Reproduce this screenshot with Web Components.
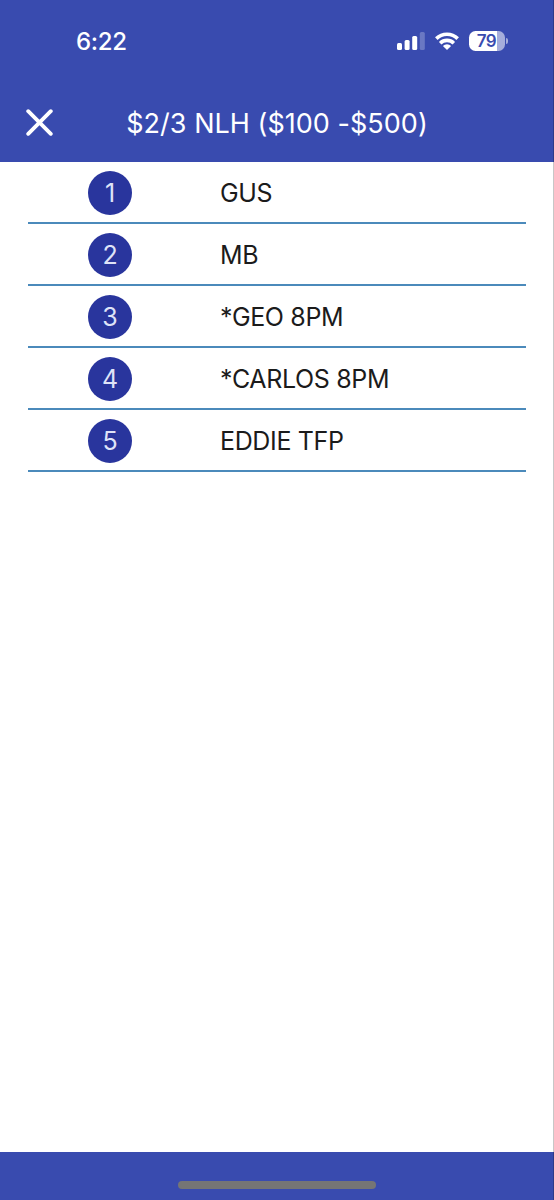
<!DOCTYPE html>
<html lang="en">
<head>
<meta charset="utf-8">
<title>Waiting list</title>
<style>
	html, body { margin: 0; height: 100%; }
	body { background: #fff; font-family: Inter, "Liberation Sans", sans-serif; }
</style>
</head>
<body>
<phone-screen>
	<status-bar slot="top" battery="79">6:22</status-bar>
	<title-bar slot="top">$2/3 NLH ($100 -$500)</title-bar>
	<wait-list>
		<wait-row number="1">GUS</wait-row>
		<wait-row number="2">MB</wait-row>
		<wait-row number="3">*GEO 8PM</wait-row>
		<wait-row number="4">*CARLOS 8PM</wait-row>
		<wait-row number="5">EDDIE TFP</wait-row>
	</wait-list>
	<home-bar slot="bottom"></home-bar>
</phone-screen>

<script>
	// attach an open shadow root holding the given markup
	class BaseElement extends HTMLElement {
		constructor() {
			super();
			const template = document.createElement('template');
			template.innerHTML = this.constructor.markup;
			this.attachShadow({ mode: 'open' }).appendChild(template.content.cloneNode(true));
		}
	}

	class PhoneScreen extends BaseElement {
		static markup = `
			<style>
				:host { display: flex; flex-direction: column; height: 1200px; background: #fff; position: relative; }
				/* thin shade along the right edge, over the bars too */
				:host::after { content: ""; position: absolute; top: 0; right: 0; bottom: 0; width: 1px; background: rgba(0, 0, 0, 0.22); }
				main { flex: 1; }
			</style>
			<slot name="top"></slot>
			<main><slot></slot></main>
			<slot name="bottom"></slot>`;
	}

	class StatusBar extends BaseElement {
		static markup = `
			<style>
				:host { display: flex; justify-content: space-between; align-items: center; box-sizing: border-box; height: 84px; padding: 0 46px 2px 76px; background: #394baf; color: #fff; font-size: 24px; font-weight: 500; letter-spacing: -0.3px; }
				.icons { display: flex; align-items: center; gap: 10px; }
				svg { display: block; }
				.battery { display: flex; align-items: center; gap: 1px; }
				.level { box-sizing: border-box; width: 36px; height: 20px; border-radius: 6.5px; background: linear-gradient(to right, #fff 78%, #a5addb 78%); color: #394baf; font-size: 17px; line-height: 21px; font-weight: 620; text-align: center; letter-spacing: -0.4px; padding-right: 1px; }
				.cap { width: 2px; height: 6px; border-radius: 0 2px 2px 0; background: #a5addb; }
			</style>
			<span><slot></slot></span>
			<div class="icons">
				<svg width="28" height="18" viewBox="0 0 28 18" fill="#fff">
					<rect x="0" y="11" width="5" height="7" rx="1.5"/>
					<rect x="7.6" y="8" width="5" height="10" rx="1.5"/>
					<rect x="15.2" y="4" width="5" height="14" rx="1.5"/>
					<rect x="22.8" y="0" width="5" height="18" rx="1.5" opacity=".25"/>
				</svg>
				<svg width="24" height="18" viewBox="0 0 24 18" fill="none" stroke="#fff" stroke-width="3.6">
					<path d="M1.3 6.6a15.2 15.2 0 0 1 21.4 0"/>
					<path d="M5.2 11.2a9.7 9.7 0 0 1 13.6 0"/>
					<path d="M12 18 7.9 14a5.8 5.8 0 0 1 8.2 0Z" fill="#fff" stroke="none"/>
				</svg>
				<div class="battery"><div class="level"></div><div class="cap"></div></div>
			</div>`;

		connectedCallback() {
			this.shadowRoot.querySelector('.level').textContent = this.getAttribute('battery');
		}
	}

	class TitleBar extends BaseElement {
		static markup = `
			<style>
				:host { display: grid; grid-template-columns: 53px 1fr 53px; align-items: center; height: 78px; background: #394baf; color: #fff; font-size: 27px; font-weight: 420; letter-spacing: 0.03px; text-align: center; white-space: nowrap; }
				svg { display: block; justify-self: end; margin-bottom: 1px; }
			</style>
			<svg width="27" height="27" viewBox="0 0 27 27" stroke="#fff" stroke-width="3.8" stroke-linecap="round"><path d="M2.2 2.2 24.8 24.8M24.8 2.2 2.2 24.8"/></svg>
			<span><slot></slot></span>`;
	}

	class WaitList extends BaseElement {
		static markup = `
			<style>
				:host { display: block; margin: 0 28px; }
			</style>
			<slot></slot>`;
	}

	class WaitRow extends BaseElement {
		static markup = `
			<style>
				:host { display: grid; grid-template-columns: 192px 1fr; align-items: center; box-sizing: border-box; height: 62px; border-bottom: 2px solid #4b8abb; color: #1b1b1b; font-size: 25px; font-weight: 430; letter-spacing: -0.35px; }
				.number { width: 44px; height: 44px; margin: 2px 0 0 60px; border-radius: 50%; background: #29359d; color: #dfe3f8; line-height: 45px; text-align: center; letter-spacing: 0; }
				.name { padding-top: 2px; }
			</style>
			<div class="number"></div>
			<div class="name"><slot></slot></div>`;

		connectedCallback() {
			this.shadowRoot.querySelector('.number').textContent = this.getAttribute('number');
		}
	}

	class HomeBar extends BaseElement {
		static markup = `
			<style>
				:host { display: flex; justify-content: center; align-items: flex-end; box-sizing: border-box; height: 48px; padding-bottom: 11px; background: #394baf; }
				div { width: 198px; height: 8px; border-radius: 4px; background: #757575; }
			</style>
			<div></div>`;
	}

	customElements.define('phone-screen', PhoneScreen);
	customElements.define('status-bar', StatusBar);
	customElements.define('title-bar', TitleBar);
	customElements.define('wait-list', WaitList);
	customElements.define('wait-row', WaitRow);
	customElements.define('home-bar', HomeBar);
</script>
</body>
</html>
